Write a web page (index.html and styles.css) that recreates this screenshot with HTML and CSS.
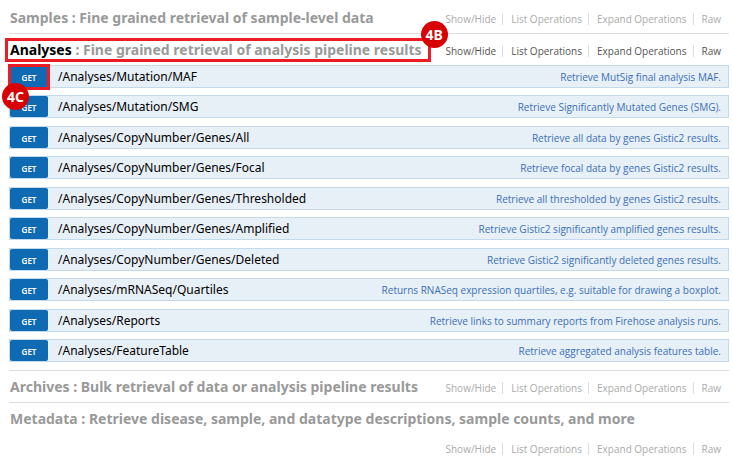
FILE: index.html
```
<!DOCTYPE html>
<html lang="en">
<head>
<meta charset="utf-8">
<title>API operations</title>
<link rel="stylesheet" href="styles.css">
</head>
<body>
<main class="resources">
  <section class="resource">
    <header class="heading">
      <h2><a href="#samples">Samples : Fine grained retrieval of sample-level data</a></h2>
      <ul class="options">
        <li><a href="#">Show/Hide</a></li><li><a href="#">List Operations</a></li><li><a href="#">Expand Operations</a></li><li><a href="#">Raw</a></li>
      </ul>
    </header>
  </section>
  <section class="resource active">
    <header class="heading">
      <h2 class="marked"><a href="#analyses"><span class="name">Analyses</span> : Fine grained retrieval of analysis pipeline results</a><span class="badge badge-title">4B</span></h2>
      <ul class="options">
        <li><a href="#">Show/Hide</a></li><li><a href="#">List Operations</a></li><li><a href="#">Expand Operations</a></li><li><a href="#">Raw</a></li>
      </ul>
    </header>
    <ul class="operations">
      <li class="operation marked-method"><a class="method" href="#">GET</a><a class="path" href="#">/Analyses/Mutation/MAF</a><a class="summary" href="#">Retrieve MutSig final analysis MAF.</a><span class="badge badge-method">4C</span></li>
      <li class="operation"><a class="method" href="#">GET</a><a class="path" href="#">/Analyses/Mutation/SMG</a><a class="summary" href="#">Retrieve Significantly Mutated Genes (SMG).</a></li>
      <li class="operation"><a class="method" href="#">GET</a><a class="path" href="#">/Analyses/CopyNumber/Genes/All</a><a class="summary" href="#">Retrieve all data by genes Gistic2 results.</a></li>
      <li class="operation"><a class="method" href="#">GET</a><a class="path" href="#">/Analyses/CopyNumber/Genes/Focal</a><a class="summary" href="#">Retrieve focal data by genes Gistic2 results.</a></li>
      <li class="operation"><a class="method" href="#">GET</a><a class="path" href="#">/Analyses/CopyNumber/Genes/Thresholded</a><a class="summary" href="#">Retrieve all thresholded by genes Gistic2 results.</a></li>
      <li class="operation"><a class="method" href="#">GET</a><a class="path" href="#">/Analyses/CopyNumber/Genes/Amplified</a><a class="summary" href="#">Retrieve Gistic2 significantly amplified genes results.</a></li>
      <li class="operation"><a class="method" href="#">GET</a><a class="path" href="#">/Analyses/CopyNumber/Genes/Deleted</a><a class="summary" href="#">Retrieve Gistic2 significantly deleted genes results.</a></li>
      <li class="operation"><a class="method" href="#">GET</a><a class="path" href="#">/Analyses/mRNASeq/Quartiles</a><a class="summary" href="#">Returns RNASeq expression quartiles, e.g. suitable for drawing a boxplot.</a></li>
      <li class="operation"><a class="method" href="#">GET</a><a class="path" href="#">/Analyses/Reports</a><a class="summary" href="#">Retrieve links to summary reports from Firehose analysis runs.</a></li>
      <li class="operation"><a class="method" href="#">GET</a><a class="path" href="#">/Analyses/FeatureTable</a><a class="summary" href="#">Retrieve aggregated analysis features table.</a></li>
    </ul>
  </section>
  <section class="resource">
    <header class="heading">
      <h2><a href="#archives">Archives : Bulk retrieval of data or analysis pipeline results</a></h2>
      <ul class="options">
        <li><a href="#">Show/Hide</a></li><li><a href="#">List Operations</a></li><li><a href="#">Expand Operations</a></li><li><a href="#">Raw</a></li>
      </ul>
    </header>
  </section>
  <section class="resource">
    <header class="heading">
      <h2><a href="#metadata">Metadata : Retrieve disease, sample, and datatype descriptions, sample counts, and more</a></h2>
      <ul class="options">
        <li><a href="#">Show/Hide</a></li><li><a href="#">List Operations</a></li><li><a href="#">Expand Operations</a></li><li><a href="#">Raw</a></li>
      </ul>
    </header>
  </section>
</main>
</body>
</html>
```
FILE: styles.css
```
*,
*::before {
  box-sizing: border-box;
}

body {
  margin: 0;
  background: #fff;
  color: #000;
  font-family: "Noto Sans", "Open Sans", sans-serif;
}

a {
  color: inherit;
  text-decoration: none;
}

ul {
  margin: 0;
  padding: 0;
  list-style: none;
}

.resources {
  padding: 2px 4px 0 9px;
}

.resource + .resource {
  border-top: 1px solid #ddd;
}

.heading {
  display: flex;
  flex-wrap: wrap;
  align-items: center;
  row-gap: 4px;
  color: #999;
}

h2 {
  margin: 0;
  padding-left: 1px;
  font-size: 14px;
  font-weight: 700;
  line-height: 31px;
  white-space: nowrap;
}

.options {
  display: flex;
  margin-left: auto;
  padding: 5px 8px 2px 0;
  color: #aaa;
  font-family: "Open Sans", sans-serif;
  font-size: 10px;
}

.options li {
  line-height: 12px;
  padding: 0 6px 0 8px;
  border-right: 1px solid #ddd;
}

.options li:first-child {
  padding-left: 0;
}

.options li:last-child {
  padding-right: 0;
  border-right: 0;
}

.active .options {
  color: #555;
}

.name {
  color: #000;
}

.marked {
  position: relative;
}

.marked::before {
  content: "";
  position: absolute;
  inset: 4px -9px 3px -4px;
  border: 3px solid #ed1c24;
}

.badge {
  position: absolute;
  z-index: 1;
  width: 27px;
  height: 27px;
  border-radius: 50%;
  background: #d80000;
  color: #fff;
  font-size: 14px;
  font-weight: 700;
  line-height: 27px;
  text-align: center;
}

.badge-title {
  top: -13px;
  right: -26px;
}

.operations {
  padding-bottom: 8px;
}

.operation {
  position: relative;
  display: flex;
  align-items: center;
  height: 23px;
  margin-bottom: 7px;
  border: 1px solid #c3d9ec;
  background: #e7eff7;
}

.operation:nth-child(even) {
  margin-bottom: 8px;
}

.operation:last-child {
  margin-bottom: 0;
}

.method {
  width: 38px;
  padding-top: 2px;
  border-radius: 2px;
  background: #0f6ab4;
  color: #fff;
  font-size: 8px;
  font-weight: 600;
  line-height: 19px;
  text-align: center;
}

.path {
  margin-left: 10px;
  font-size: 12px;
}

.summary {
  margin-left: auto;
  padding-right: 7px;
  color: #3b6fb6;
  font-family: "Open Sans", sans-serif;
  font-size: 10px;
}

.marked-method::before {
  content: "";
  position: absolute;
  top: -2px;
  left: -2px;
  width: 42px;
  height: 26px;
  border: 3px solid #ed1c24;
}

.badge-method {
  top: 17px;
  left: -8px;
}
```
